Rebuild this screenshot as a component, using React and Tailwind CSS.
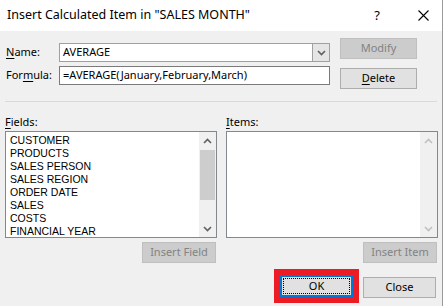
import React from 'react';

const FIELDS = ["CUSTOMER", "PRODUCTS", "SALES PERSON", "SALES REGION", "ORDER DATE", "SALES", "COSTS", "FINANCIAL YEAR"];

const Chevron = ({ up = false, color = "#606060" }) => (
  <svg width="9" height="6" viewBox="0 0 9 6">
    <path d={up ? "M1 5 L4.5 1.5 L8 5" : "M1 1 L4.5 4.5 L8 1"} fill="none" stroke={color} strokeWidth="1.6" />
  </svg>
);

const Btn = ({ children, disabled, className = "" }) => (
  <div className={`h-[21px] flex items-center justify-center border ${disabled ? 'border-[#bfbfbf] bg-[#cccccc] text-[#838383]' : 'border-[#adadad] bg-[#e1e1e1] text-black'} ${className}`}>
    {children}
  </div>
);

const U = ({ children }) => <span className="underline underline-offset-2">{children}</span>;

export default function App() {
  return (
    <div className="w-[445px] h-[306px] bg-white font-['Segoe_UI','Noto_Sans',sans-serif] text-[11px] text-black overflow-hidden">
      <div className="w-[443px] h-[306px] bg-[#f0f0f0] border-r border-[#9a9a9a]">
        {/* title bar */}
        <div className="h-[31px] bg-white flex items-center pl-[7px] pr-[13px]">
          <span className="text-[12.5px] flex-1">Insert Calculated Item in "SALES MONTH"</span>
          <span className="text-[13px] mr-[38px]">?</span>
          <svg width="11" height="11" viewBox="0 0 11 11">
            <path d="M0.5 0.5 L10.5 10.5 M10.5 0.5 L0.5 10.5" stroke="#000" strokeWidth="1.1" />
          </svg>
        </div>

        {/* name / formula */}
        <div className="flex pl-[6px] pt-[7px]">
          <div className="pt-[5px] flex flex-col gap-[4px]">
            <div className="flex items-center h-[19px]">
              <span className="w-[53px]"><U>N</U>ame:</span>
              <div className="w-[271px] h-[19px] bg-white border border-[#a0a0a0] flex items-center">
                <span className="flex-1 pl-[3px]">AVERAGE</span>
                <div className="w-[17px] h-[17px] bg-[#e5e5e5] border-l border-[#a0a0a0] flex items-center justify-center">
                  <Chevron />
                </div>
              </div>
            </div>
            <div className="flex items-center h-[19px]">
              <span className="w-[53px]">For<U>m</U>ula:</span>
              <div className="w-[271px] h-[19px] bg-white border border-[#7a7a7a] flex items-center pl-[3px]">
                =AVERAGE(January,February,March)
              </div>
            </div>
          </div>
          <div className="ml-[10px] flex flex-col gap-[9px]">
            <Btn disabled className="w-[77px]">Modify</Btn>
            <Btn className="w-[77px]"><U>D</U>elete</Btn>
          </div>
        </div>

        <div className="ml-[5px] mt-[12px] w-[432px] h-px bg-[#dadada]"></div>

        {/* fields / items */}
        <div className="flex ml-[5px] mt-[12px] gap-[9px]">
          <div className="w-[212px] flex flex-col">
            <div className="h-[17px]"><U>F</U>ields:</div>
            <div className="h-[107px] bg-white border border-[#828790] flex">
              <div className="flex-1 pl-[4px] pt-[2px] font-['Liberation_Sans',sans-serif] text-[10.5px]">
                {FIELDS.map(f => <div key={f} className="h-[13px] leading-[13px]">{f}</div>)}
              </div>
              <div className="w-[17px] bg-[#f0f0f0] flex flex-col items-center">
                <div className="h-[17px] flex items-center justify-center"><Chevron up /></div>
                <div className="flex-1 w-full px-px">
                  <div className="mt-px h-[50px] bg-[#cdcdcd]"></div>
                </div>
                <div className="h-[17px] flex items-center justify-center"><Chevron /></div>
              </div>
            </div>
            <div className="flex justify-end mt-[4px]">
              <Btn disabled className="w-[74px] mr-px">Insert Field</Btn>
            </div>
          </div>

          <div className="w-[212px] flex flex-col">
            <div className="h-[17px]"><U>I</U>tems:</div>
            <div className="h-[107px] bg-white border border-[#828790] flex">
              <div className="flex-1"></div>
              <div className="w-[17px] bg-[#f0f0f0] flex flex-col items-center justify-between">
                <div className="h-[17px] flex items-center justify-center"><Chevron up color="#c0c0c0" /></div>
                <div className="h-[17px] flex items-center justify-center"><Chevron color="#c0c0c0" /></div>
              </div>
            </div>
            <div className="flex justify-end mt-[4px]">
              <Btn disabled className="w-[74px] mr-px">Insert Item</Btn>
            </div>
          </div>
        </div>

        {/* ok / close */}
        <div className="flex justify-end items-start mt-[6px] pr-[6px] gap-[4px]">
          <div className="w-[85px] h-[34px] bg-[#ed1c24] p-[6px]">
            <div className="w-full h-full border-2 border-[#0078d7] bg-[#e1e1e1] p-px">
              <div className="w-full h-full border border-dotted border-black flex items-center justify-center">OK</div>
            </div>
          </div>
          <Btn className="w-[73px] mt-[8px]">Close</Btn>
        </div>
      </div>
    </div>
  );
}
